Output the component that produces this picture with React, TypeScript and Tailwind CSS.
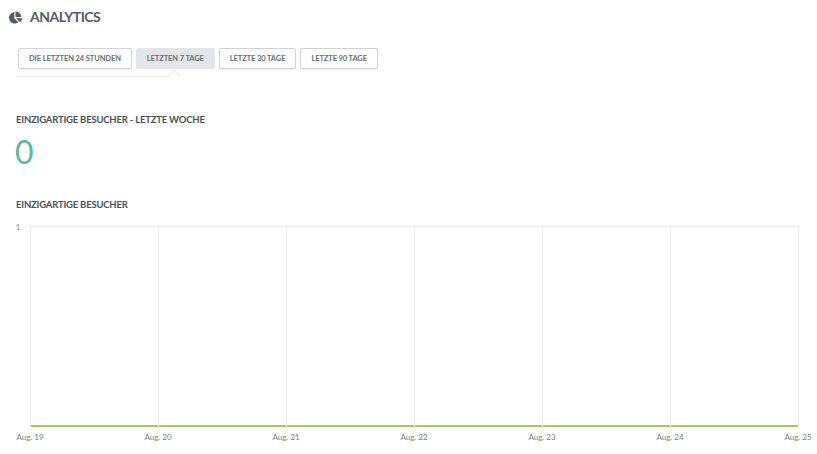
import { FaChartPie } from "react-icons/fa";

const tabs = ["Die letzten 24 Stunden", "Letzten 7 Tage", "Letzte 30 Tage", "Letzte 90 Tage"];
const days = ["Aug. 19", "Aug. 20", "Aug. 21", "Aug. 22", "Aug. 23", "Aug. 24", "Aug. 25"];

export default function App() {
  return (
    <div className="w-[817px] h-[454px] bg-white overflow-hidden font-['Lato',sans-serif] text-[#4d525a]">
      <div className="flex items-center gap-[8px] pl-[9px] pt-[7px] leading-[20px]">
        <FaChartPie className="w-[13px] h-[13px] text-[#575c64]" />
        <span className="text-[14px] font-bold tracking-[-0.5px] text-[#575c64]">ANALYTICS</span>
      </div>

      <div className="mt-[21px] ml-[18px] flex gap-[4px]">
        {tabs.map((t, i) => (
          <button
            key={t}
            className={
              i === 1
                ? "h-[21px] px-[10px] rounded-[2px] bg-[#e4e5e8] border border-[#e4e5e8] text-[7.5px] font-bold uppercase tracking-[-0.1px] text-[#6a6e75]"
                : "h-[21px] px-[10px] rounded-[2px] bg-white border border-[#d2d3d6] shadow-[0_1px_1px_rgba(0,0,0,0.06)] text-[7.5px] font-bold uppercase tracking-[-0.1px] text-[#6a6e75]"
            }
          >
            {t}
          </button>
        ))}
      </div>

      <div className="ml-[16px] h-[9px] w-[170px] relative">
        <div className="absolute left-0 bottom-[1px] w-[151px] h-px bg-[#ebebeb]" />
        <svg className="absolute left-[150px] top-0" width="20" height="9" viewBox="0 0 20 9">
          <path d="M0 7.5 L2 7.5 L8 1 L14 7.5" fill="none" stroke="#e2e2e2" strokeWidth="1" />
        </svg>
      </div>

      <div className="mt-[35px] ml-[16px] text-[9.5px] font-bold uppercase tracking-[-0.2px] leading-[14px] text-[#4d525a]">
        Einzigartige Besucher - Letzte Woche
      </div>
      <div className="ml-[15px] mt-[8px] text-[32px] leading-[34px] text-[#56bba3]">0</div>

      <div className="mt-[29px] ml-[16px] text-[9.5px] font-bold uppercase tracking-[-0.2px] leading-[14px] text-[#4d525a]">
        Einzigartige Besucher
      </div>

      <div className="mt-[14px] flex">
        <div className="w-[30px] pl-[16px] text-[7px] leading-[8px] text-[#888] -mt-[3px]">1</div>
        <div className="w-[769px] h-[201px] grid grid-cols-6 border-t border-[#ececec] border-r">
          {days.slice(1).map((d) => (
            <div key={d} className="border-l border-[#ececec] flex flex-col justify-end">
              <div className="h-[2px] bg-[#9bd060]" />
            </div>
          ))}
        </div>
      </div>

      <div className="ml-[30px] w-[768px] mt-[5px] flex justify-between">
        {days.map((d) => (
          <div key={d} className="w-0 flex justify-center">
            <span className="whitespace-nowrap text-[8px] leading-[10px] text-[#7a7e84]">{d}</span>
          </div>
        ))}
      </div>
    </div>
  );
}
